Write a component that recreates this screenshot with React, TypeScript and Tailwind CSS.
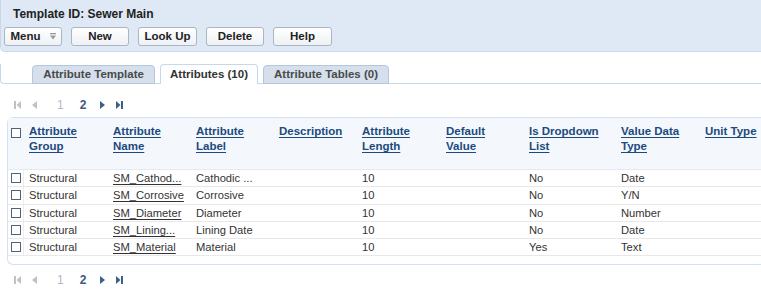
import React from "react";

const FONT = { fontFamily: '"Liberation Sans", Arial, sans-serif' };

function Btn({ label, w, menu }: { label: string; w: string; menu?: boolean }) {
  return (
    <div
      className={`${w} h-[19px] flex items-center justify-center gap-[9px] border border-[#aab6c3] rounded-[3px] bg-gradient-to-b from-white to-[#eef1f5] text-[11.5px] font-bold text-[#222]`}
    >
      <span>{label}</span>
      {menu && (
        <svg width="6" height="7" viewBox="0 0 6 7">
          <rect x="0" y="0" width="6" height="1.3" fill="#999" />
          <polygon points="0,2.4 6,2.4 3,6.6" fill="#999" />
        </svg>
      )}
    </div>
  );
}

function Pager() {
  const dis = "#bcc3cb";
  const act = "#3f5f86";
  return (
    <div className="flex items-center h-[16px] pl-[14px]">
      <svg width="7" height="8" viewBox="0 0 7 8">
        <rect x="0" y="0" width="2" height="8" fill={dis} />
        <polygon points="7,0 7,8 2.5,4" fill={dis} />
      </svg>
      <svg className="ml-[11px]" width="5" height="8" viewBox="0 0 5 8">
        <polygon points="5,0 5,8 0,4" fill={dis} />
      </svg>
      <span className="ml-[20px] text-[12px] text-[#b0b8c2] leading-none">1</span>
      <span className="ml-[16px] text-[12px] font-bold text-[#3f5a7c] leading-none">2</span>
      <svg className="ml-[14px]" width="5" height="8" viewBox="0 0 5 8">
        <polygon points="0,0 0,8 5,4" fill={act} />
      </svg>
      <svg className="ml-[11px]" width="7" height="8" viewBox="0 0 7 8">
        <polygon points="0,0 0,8 4.5,4" fill={act} />
        <rect x="5" y="0" width="2" height="8" fill={act} />
      </svg>
    </div>
  );
}

function Check() {
  return <div className="w-[10px] h-[10px] border border-[#50647a] bg-white" />;
}

const cols = [
  { w: "w-[84px]", h: ["Attribute", "Group"] },
  { w: "w-[83px]", h: ["Attribute", "Name"] },
  { w: "w-[83px]", h: ["Attribute", "Label"] },
  { w: "w-[83px]", h: ["Description"] },
  { w: "w-[84px]", h: ["Attribute", "Length"] },
  { w: "w-[83px]", h: ["Default", "Value"] },
  { w: "w-[92px]", h: ["Is Dropdown", "List"] },
  { w: "w-[84px]", h: ["Value Data", "Type"] },
  { w: "w-[90px]", h: ["Unit Type"] },
];

const rows = [
  ["Structural", "SM_Cathod...", "Cathodic ...", "", "10", "", "No", "Date", ""],
  ["Structural", "SM_Corrosive", "Corrosive", "", "10", "", "No", "Y/N", ""],
  ["Structural", "SM_Diameter", "Diameter", "", "10", "", "No", "Number", ""],
  ["Structural", "SM_Lining...", "Lining Date", "", "10", "", "No", "Date", ""],
  ["Structural", "SM_Material", "Material", "", "10", "", "Yes", "Text", ""],
];

export default function App() {
  return (
    <div className="w-[761px] h-[291px] bg-white overflow-hidden" style={FONT}>
      {/* Header */}
      <div className="h-[52px] bg-[#dfe9f5] border-b border-l border-[#c6d8ea] rounded-bl-[5px]">
        <div className="pl-[12px] pt-[7px] text-[12px] leading-[14px] font-bold text-[#222]">
          Template ID: Sewer Main
        </div>
        <div className="flex gap-[9px] pl-[3px] mt-[6px]">
          <Btn label="Menu" w="w-[58px]" menu />
          <Btn label="New" w="w-[58px]" />
          <Btn label="Look Up" w="w-[59px]" />
          <Btn label="Delete" w="w-[58px]" />
          <Btn label="Help" w="w-[59px]" />
        </div>
      </div>

      {/* Tabs */}
      <div className="mt-[12px] h-[20px] flex items-end gap-[5px] pl-[31px] border-b border-l border-[#c6d8ec] rounded-bl-[4px]">
        <div className="w-[123px] h-[19px] -mb-px flex items-center justify-center bg-[#d5e0ec] border border-[#b4c7db] rounded-t-[4px] text-[11.5px] font-bold text-[#4a4a4a]">
          Attribute Template
        </div>
        <div className="w-[98px] h-[20px] -mb-px flex items-center justify-center bg-white border border-b-0 border-[#c6d8ec] rounded-t-[4px] text-[11.5px] font-bold text-[#333]">
          Attributes (10)
        </div>
        <div className="w-[126px] h-[19px] -mb-px flex items-center justify-center bg-[#d5e0ec] border border-[#b4c7db] rounded-t-[4px] text-[11.5px] font-bold text-[#4a4a4a]">
          Attribute Tables (0)
        </div>
      </div>

      <div className="mt-[13px]">
        <Pager />
      </div>

      {/* Table panel */}
      <div className="ml-[7px] mt-[4px] border-l border-t border-b border-[#d3e2f0] rounded-tl-[6px] rounded-bl-[6px] pb-[8px]">
        <div className="flex h-[52px] bg-[#f4f8fc] border-b border-[#e2e9f0]">
          <div className="w-[16px] shrink-0 pl-[3px] pt-[10px]">
            <Check />
          </div>
          {cols.map((c, i) => (
            <div
              key={i}
              className={`${c.w} shrink-0 pl-[5px] pt-[6px] text-[11.5px] leading-[15px] font-bold text-[#1d4a7e]`}
            >
              {c.h.map((t, j) => (
                <div key={j}>
                  <span className="underline underline-offset-2 decoration-[#1d4a7e]">{t}</span>
                </div>
              ))}
            </div>
          ))}
        </div>
        {rows.map((r, ri) => (
          <div key={ri} className="flex h-[17.3px] border-b border-[#e8e8e8] items-center">
            <div className="w-[16px] h-full shrink-0 pl-[3px] flex items-center border-r border-[#ececec]">
              <Check />
            </div>
            {r.map((v, ci) => (
              <div
                key={ci}
                className={`${cols[ci].w} shrink-0 pl-[5px] text-[11.2px] text-[#333] leading-[16px] whitespace-nowrap`}
              >
                {ci === 1 ? (
                  <span className="underline underline-offset-2 decoration-[#333]">{v}</span>
                ) : (
                  v
                )}
              </div>
            ))}
          </div>
        ))}
      </div>

      <div className="mt-[7px]">
        <Pager />
      </div>
    </div>
  );
}
